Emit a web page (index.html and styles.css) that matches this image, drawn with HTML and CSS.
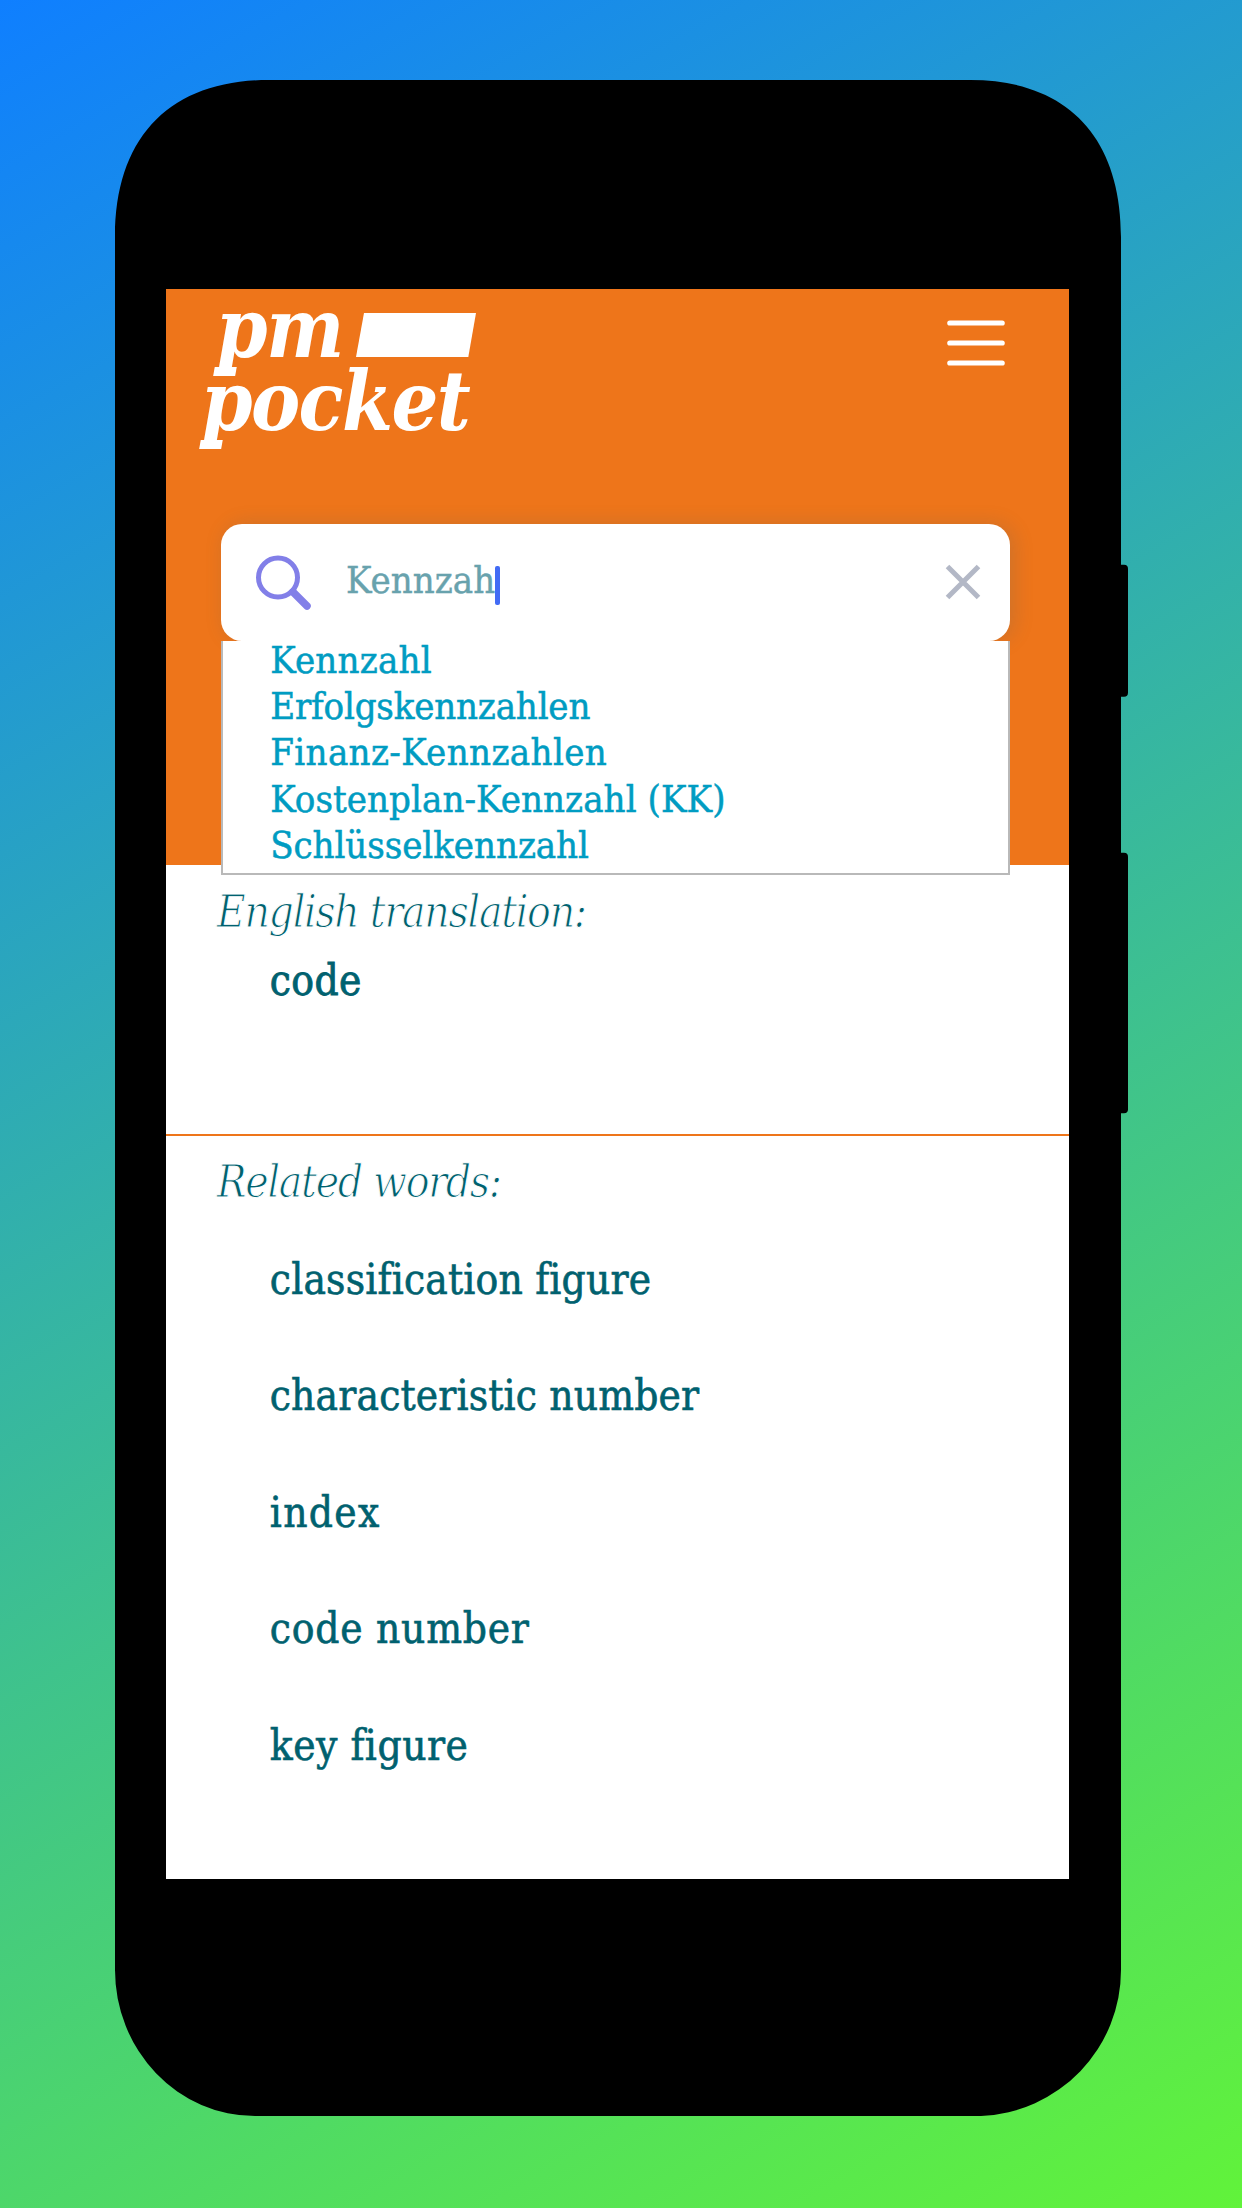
FILE: index.html
```html
<!DOCTYPE html>
<html lang="de">
<head>
<meta charset="utf-8">
<title>pm pocket</title>
<link rel="stylesheet" href="styles.css">
</head>
<body>
<div class="stage">
  <div class="phone">
    <svg class="phone-body" viewBox="0 0 1013 2036" aria-hidden="true">
      <path d="M153.500 0H855.500C951.500 0 1006 56.500 1006 157V1890A146 146 0 0 1 866 2036H140A140 146 0 0 1 0 1890V157C0 56.500 55.500 0 153.500 0Z"/>
      <rect x="990" y="484.700" width="23" height="132" rx="4"/>
      <rect x="990" y="772.700" width="23" height="260.600" rx="4"/>
    </svg>
    <div class="screen">
      <header class="header">
        <div class="topbar">
          <div class="logo">
            <div class="logo-row"><span class="logo-pm">pm</span><svg class="logo-flag" viewBox="0 0 120 44"><path d="M8 0H120L112.300 44H0Z"/></svg></div>
            <div class="logo-row logo-pocket">pocket</div>
          </div>
          <svg class="menu" viewBox="0 0 58 46"><path d="M2.800 3H55.200M2.800 23H55.200M2.800 43H55.200"/></svg>
        </div>
        <div class="search">
          <div class="searchbox">
            <svg class="icon-search" viewBox="0 0 58 58"><path class="handle" d="M38 37L52 51"/><circle cx="23" cy="22.500" r="19.500"/></svg>
            <span class="query">Kennzah</span><span class="caret"></span>
            <svg class="icon-clear" viewBox="0 0 36 36"><path d="M2.500 2.500L33.500 33.500M33.500 2.500L2.500 33.500"/></svg>
          </div>
          <ul class="suggestions">
            <li>Kennzahl</li>
            <li>Erfolgskennzahlen</li>
            <li>Finanz-Kennzahlen</li>
            <li>Kostenplan-Kennzahl (KK)</li>
            <li>Schlüsselkennzahl</li>
          </ul>
        </div>
      </header>
      <section class="translation">
        <h2>English translation:</h2>
        <p>code</p>
      </section>
      <section class="related">
        <h2>Related words:</h2>
        <ul>
          <li>classification figure</li>
          <li>characteristic number</li>
          <li>index</li>
          <li>code number</li>
          <li>key figure</li>
        </ul>
      </section>
    </div>
  </div>
</div>
</body>
</html>
```
FILE: styles.css
```css
* { box-sizing: border-box; }
body, h2, p, ul { margin: 0; padding: 0; }
ul { list-style: none; }
svg { display: block; flex: none; }

body {
  font-family: "DejaVu Serif Condensed", "DejaVu Serif", serif;
  color: #00616f;
}

.stage {
  width: 1242px;
  height: 2208px;
  padding: 80.3px 0 0 114.5px;
  overflow: hidden;
  background: linear-gradient(150.6deg, #0f7fff, #61f33a);
}

.phone {
  position: relative;
  width: 1006px;
  height: 2036px;
  padding: 208.4px 0 0 51.8px;
}
.phone-body {
  position: absolute;
  left: 0;
  top: 0;
  width: 1013px;
  height: 2036px;
}
.screen {
  position: relative;
  width: 902.5px;
  height: 1590.5px;
  background: #fff;
}

.header {
  height: 576px;
  padding: 0 59px 0 54.7px;
  background: #ee751a;
}
.topbar {
  display: flex;
  justify-content: space-between;
  height: 235.3px;
}
.logo {
  width: 300px;
  margin-left: -20px;
  padding-top: 3.500px;
  color: #fff;
  font-style: italic;
  font-weight: bold;
  font-size: 82px;
  line-height: 73px;
}
.logo-row {
  position: relative;
  display: flex;
  height: 73px;
  letter-spacing: -1.4px;
}
/* slab foot under the descender of each p */
.logo-row::before {
  content: "";
  position: absolute;
  left: 13.500px;
  top: 74.500px;
  width: 21.500px;
  height: 8.500px;
  background: #fff;
  transform: skewX(-10deg);
}
.logo-pocket::before { left: -.5px; }
.logo-pm { width: 134px; margin-left: 15px; }
.logo-flag {
  width: 120px;
  height: 44px;
  margin: 21.300px 0 0 6.500px;
  fill: #fff;
}
.logo-pocket { letter-spacing: -1.6px; }
.menu {
  width: 58px;
  height: 46px;
  margin: 31px 4.500px 0 0;
  fill: none;
  stroke: #fff;
  stroke-width: 5.2;
  stroke-linecap: round;
}

.search { position: relative; }
.searchbox {
  display: flex;
  height: 116.700px;
  padding: 0 29px 0 35px;
  border-radius: 21px;
  background: #fff;
  box-shadow: 4px 0 20px rgba(70, 100, 110, .2);
}
.icon-search {
  width: 58px;
  height: 58px;
  margin: 31px 0 0 -1px;
  fill: none;
  stroke: #827fe8;
  stroke-width: 5;
}
.icon-search .handle { stroke-width: 7.500; stroke-linecap: round; }
.query {
  margin: 33.500px 0 0 33px;
  font-size: 38px;
  line-height: 46px;
  -webkit-text-stroke: .4px currentColor;
  color: #68a2ad;
}
.caret {
  width: 4.600px;
  height: 39px;
  margin: 42px 0 0 0;
  border-radius: 2px;
  background: #426bf5;
}
.icon-clear {
  width: 36px;
  height: 36px;
  margin: 40px 0 0 auto;
  fill: none;
  stroke: #b3b8c6;
  stroke-width: 5;
}

.suggestions {
  position: absolute;
  top: 116.700px;
  left: 0;
  right: 0;
  height: 234px;
  padding-left: 47.200px;
  border: 2px solid #b9b9b9;
  border-top: 0;
  background: #fff;
  color: #009cc2;
  font-size: 38px;
  line-height: 46.400px;
  -webkit-text-stroke: .5px currentColor;
}
.suggestions li:first-child { margin-top: -4px; letter-spacing: .2px; }
.suggestions li:nth-child(2) { letter-spacing: -.2px; }
.suggestions li:nth-child(3) { letter-spacing: .35px; }
.suggestions li:nth-child(4) { letter-spacing: .05px; }
.suggestions li:nth-child(5) { letter-spacing: -.08px; }

h2 {
  font-size: 44px;
  font-style: italic;
  font-weight: normal;
  line-height: 52px;
  letter-spacing: -1.300px;
  -webkit-text-stroke: 1px #fff;
}
.translation {
  height: 271.500px;
  padding: 21px 0 0 50.500px;
  border-bottom: 2.500px solid #ee751a;
}
.translation p {
  margin: 18px 0 0 53px;
  font-size: 42px;
  line-height: 50px;
  letter-spacing: .4px;
  -webkit-text-stroke: .8px currentColor;
}
.related { padding: 20px 0 0 50.500px; }
.related ul {
  margin: 13.500px 0 0 53px;
  font-size: 42px;
  line-height: 116.500px;
  -webkit-text-stroke: .6px currentColor;
}
.related li:nth-child(1) { letter-spacing: .18px; }
.related li:nth-child(2) { letter-spacing: .15px; }
.related li:nth-child(3) { letter-spacing: 1.300px; }
.related li:nth-child(4) { letter-spacing: .75px; }
.related li:nth-child(5) { letter-spacing: .5px; }
```
